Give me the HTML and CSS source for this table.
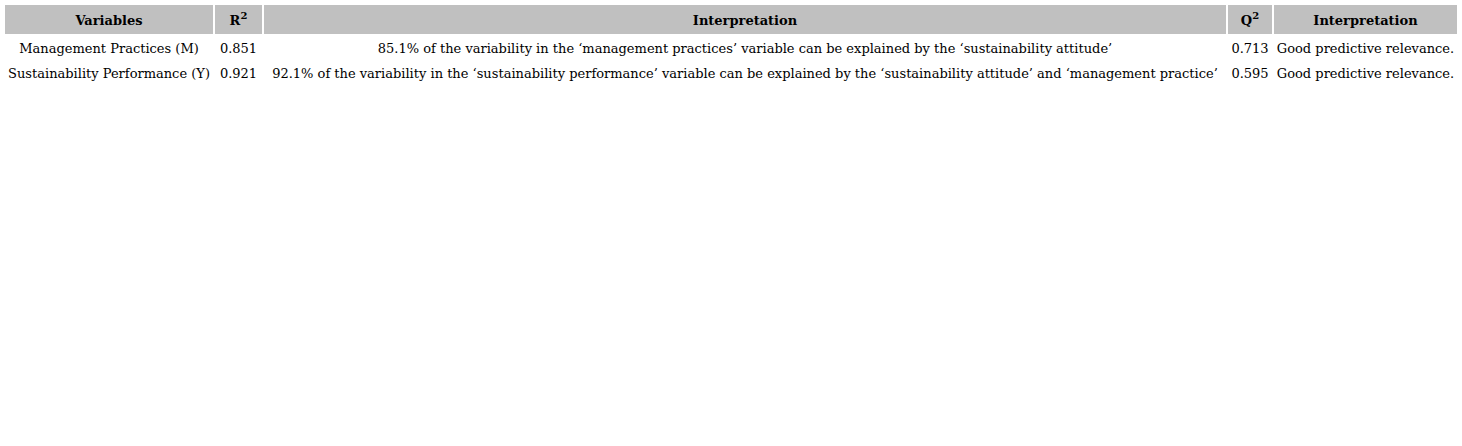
FILE: index.html
```html
<!DOCTYPE html>
<html>
<head>
<meta charset="utf-8">
<link rel="stylesheet" href="styles.css">
</head>
<body>
<table class="results">
  <colgroup>
    <col class="w-var">
    <col class="w-r">
    <col class="w-int">
    <col class="w-q">
    <col class="w-rel">
  </colgroup>
  <thead>
    <tr>
      <th>Variables</th>
      <th>R<sup>2</sup></th>
      <th>Interpretation</th>
      <th>Q<sup>2</sup></th>
      <th>Interpretation</th>
    </tr>
  </thead>
  <tbody>
    <tr>
      <td>Management Practices (M)</td>
      <td>0.851</td>
      <td>85.1% of the variability in the ‘management practices’ variable can be explained by the ‘sustainability attitude’</td>
      <td>0.713</td>
      <td>Good predictive relevance.</td>
    </tr>
    <tr>
      <td>Sustainability Performance (Y)</td>
      <td>0.921</td>
      <td>92.1% of the variability in the ‘sustainability performance’ variable can be explained by the ‘sustainability attitude’ and ‘management practice’</td>
      <td>0.595</td>
      <td>Good predictive relevance.</td>
    </tr>
  </tbody>
</table>
</body>
</html>
```

FILE: styles.css
```css
html, body {
  margin: 0;
  padding: 0;
  background: #ffffff;
}
body {
  font-family: "DejaVu Serif", "Liberation Serif", serif;
  font-size: 13px;
  color: #000000;
}
.results {
  margin: 3px;
  border-collapse: separate;
  border-spacing: 2px;
  width: 1456px;
  table-layout: fixed;
}
.w-var { width: 208px; }
.w-r { width: 47px; }
.w-int { width: 962px; }
.w-q { width: 44px; }
.w-rel { width: 183px; }
.results th {
  background: #c0c0c0;
  font-weight: bold;
  height: 28px;
  padding: 1px 0 0;
  text-align: center;
  white-space: nowrap;
}
.results th sup {
  font-size: 10px;
  vertical-align: 6px;
  line-height: 0;
}
.results td {
  height: 22px;
  padding: 1px 0 0;
  text-align: center;
  white-space: nowrap;
  font-weight: 300;
}
```
